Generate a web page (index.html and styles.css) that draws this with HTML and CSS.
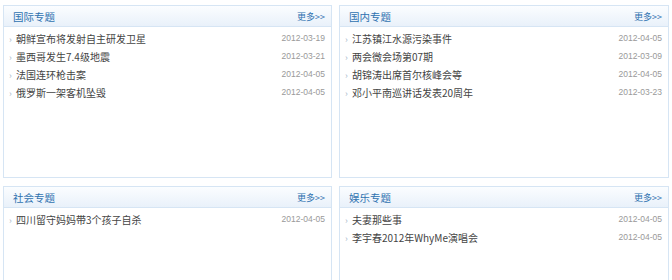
FILE: index.html
```html
<!DOCTYPE html>
<html lang="zh-CN">
<head>
    <meta charset="UTF-8">
    <title>专题</title>
    <link rel="stylesheet" href="styles.css">
</head>
<body>
    <div class="topics">
        <div class="box">
            <div class="box-head">
                <span class="box-title">国际专题</span>
                <a class="more" href="#">更多&gt;&gt;</a>
            </div>
            <ul class="list">
                <li><a href="#">朝鲜宣布将发射自主研发卫星</a><span class="date">2012-03-19</span></li>
                <li><a href="#">墨西哥发生7.4级地震</a><span class="date">2012-03-21</span></li>
                <li><a href="#">法国连环枪击案</a><span class="date">2012-04-05</span></li>
                <li><a href="#">俄罗斯一架客机坠毁</a><span class="date">2012-04-05</span></li>
            </ul>
        </div>
        <div class="box">
            <div class="box-head">
                <span class="box-title">国内专题</span>
                <a class="more" href="#">更多&gt;&gt;</a>
            </div>
            <ul class="list">
                <li><a href="#">江苏镇江水源污染事件</a><span class="date">2012-04-05</span></li>
                <li><a href="#">两会微会场第07期</a><span class="date">2012-03-09</span></li>
                <li><a href="#">胡锦涛出席首尔核峰会等</a><span class="date">2012-04-05</span></li>
                <li><a href="#">邓小平南巡讲话发表20周年</a><span class="date">2012-03-23</span></li>
            </ul>
        </div>
        <div class="box">
            <div class="box-head">
                <span class="box-title">社会专题</span>
                <a class="more" href="#">更多&gt;&gt;</a>
            </div>
            <ul class="list">
                <li><a href="#">四川留守妈妈带3个孩子自杀</a><span class="date">2012-04-05</span></li>
            </ul>
        </div>
        <div class="box">
            <div class="box-head">
                <span class="box-title">娱乐专题</span>
                <a class="more" href="#">更多&gt;&gt;</a>
            </div>
            <ul class="list">
                <li><a href="#">夫妻那些事</a><span class="date">2012-04-05</span></li>
                <li><a href="#">李宇春2012年WhyMe演唱会</a><span class="date">2012-04-05</span></li>
            </ul>
        </div>
    </div>
</body>
</html>
```
FILE: styles.css
```css
body {
    margin: 0;
    background-color: #fff;
    font-family: "Noto Sans CJK SC", "Liberation Sans", sans-serif;
    font-size: 10px;
    color: #444;
}
.topics {
    display: grid;
    grid-template-columns: 329px 330px;
    column-gap: 7px;
    row-gap: 8px;
    padding: 5px 0 0 3px;
}
.box {
    height: 173px;
    border: 1px solid #d6e5f4;
    box-sizing: border-box;
    background-color: #fff;
}
.box-head {
    height: 20px;
    display: flex;
    align-items: center;
    justify-content: space-between;
    padding: 0 6px 0 9px;
    background: linear-gradient(#fbfdff, #e9f1fa);
    border-bottom: 1px solid #d6e5f4;
}
.box-title {
    font-size: 10.5px;
    color: #2f72b0;
}
.more {
    font-size: 9px;
    color: #2f72b0;
    text-decoration: none;
}
.list {
    list-style: none;
    margin: 0;
    padding: 2px 6px 0 5px;
}
.list li {
    display: flex;
    justify-content: space-between;
    align-items: center;
    height: 18px;
}
.list li a {
    color: #444;
    text-decoration: none;
}
.list li a::before {
    content: "›";
    display: inline-block;
    width: 7px;
    color: #a5b8cb;
    font-size: 9px;
}
.date {
    font-family: "Liberation Sans", sans-serif;
    font-size: 8.5px;
    color: #999;
}
```
